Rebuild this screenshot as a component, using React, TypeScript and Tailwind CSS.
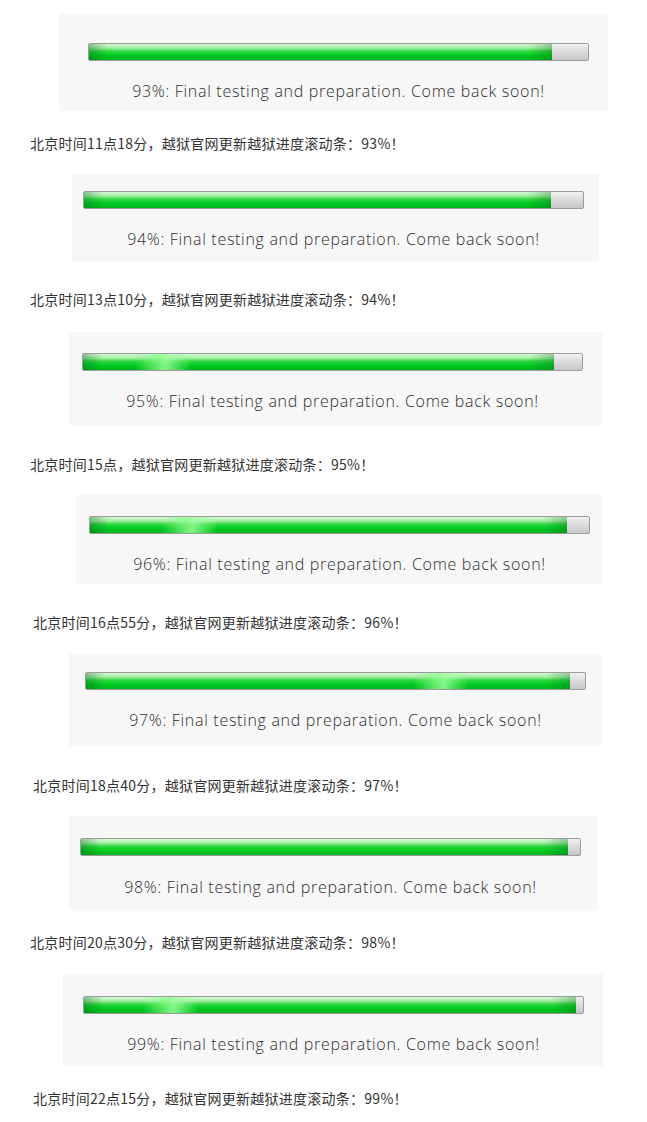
const updates = [
  {
    pct: 93,
    fill: 463,
    glow: null as number | null,
    time: "11点18分",
    box: "ml-[59px] mt-[14px] w-[549px] h-[97px] pt-[29px] pl-[29px]",
    text: "mt-[20px]",
    caption: "ml-[30px] mt-[22px]",
  },
  {
    pct: 94,
    fill: 467,
    glow: null,
    time: "13点10分",
    box: "ml-[72px] mt-[22px] w-[527px] h-[86px] pt-[16px] pl-[11px]",
    text: "mt-[20px]",
    caption: "ml-[30px] mt-[28px]",
  },
  {
    pct: 95,
    fill: 471,
    glow: 80,
    time: "15点",
    box: "ml-[69px] mt-[23px] w-[533px] h-[93px] pt-[21px] pl-[13px]",
    text: "mt-[20px]",
    caption: "ml-[30px] mt-[29px]",
  },
  {
    pct: 96,
    fill: 477,
    glow: 100,
    time: "16点55分",
    box: "ml-[76px] mt-[21px] w-[526px] h-[89px] pt-[21px] pl-[13px]",
    text: "mt-[20px]",
    caption: "ml-[33px] mt-[28px]",
  },
  {
    pct: 97,
    fill: 484,
    glow: 355,
    time: "18点40分",
    box: "ml-[69px] mt-[22px] w-[533px] h-[92px] pt-[18px] pl-[16px]",
    text: "mt-[20px]",
    caption: "ml-[33px] mt-[29px]",
  },
  {
    pct: 98,
    fill: 487,
    glow: null,
    time: "20点30分",
    box: "ml-[69px] mt-[21px] w-[529px] h-[94px] pt-[22px] pl-[11px]",
    text: "mt-[21px]",
    caption: "ml-[30px] mt-[22px]",
  },
  {
    pct: 99,
    fill: 492,
    glow: 87,
    time: "22点15分",
    box: "ml-[63px] mt-[22px] w-[540px] h-[92px] pt-[22px] pl-[20px]",
    text: "mt-[20px]",
    caption: "ml-[33px] mt-[22px]",
  },
];

function ProgressBar({ fill, glow }: { fill: number; glow: number | null }) {
  return (
    <div className="relative w-[501px] h-[18px] rounded-[2px] border border-[#9c9c9c] bg-[linear-gradient(to_bottom,#f2f2f2_0%,#dedede_40%,#c8c8c8_100%)] overflow-hidden">
      <div
        className="relative h-full bg-[linear-gradient(to_bottom,#d6f8d6_0%,#a4eea4_25%,#30d640_45%,#00cc22_70%,#00b41e_100%)]"
        style={{ width: fill }}
      >
        {/* darker ends of the green fill */}
        <div className="absolute inset-0 bg-[linear-gradient(to_right,rgba(0,90,20,0.35)_0%,rgba(0,90,20,0)_4%,rgba(0,90,20,0)_95%,rgba(0,90,20,0.3)_100%)]" />
        {glow !== null && (
          <div
            className="absolute top-0 h-full w-[56px] bg-[linear-gradient(to_right,rgba(140,250,140,0)_0%,rgba(140,250,140,0.8)_45%,rgba(160,255,160,0.8)_55%,rgba(140,250,140,0)_100%)]"
            style={{ left: glow - 28 }}
          />
        )}
      </div>
    </div>
  );
}

export default function App() {
  return (
    <div className="w-[647px] min-h-[1122px] bg-white flex flex-col pb-[14px]">
      {updates.map((u) => (
        <div key={u.pct} className="flex flex-col">
          <div className={`bg-[#f7f7f7] ${u.box}`}>
            <div className="w-[501px] flex flex-col">
              <ProgressBar fill={u.fill} glow={u.glow} />
              <p
                className={`${u.text} text-center text-[16px] leading-[20px] font-light text-[#2e2e2e] tracking-[0.7px] whitespace-nowrap font-['Open_Sans','DejaVu_Sans',sans-serif]`}
              >
                {u.pct}%: Final testing and preparation. Come back soon!
              </p>
            </div>
          </div>
          <p
            className={`${u.caption} text-[14px] leading-[20px] text-[#333333] tracking-[0.25px] font-['Noto_Sans_CJK_SC',sans-serif]`}
          >
            北京时间{u.time}，越狱官网更新越狱进度滚动条：{u.pct}%！
          </p>
        </div>
      ))}
    </div>
  );
}
